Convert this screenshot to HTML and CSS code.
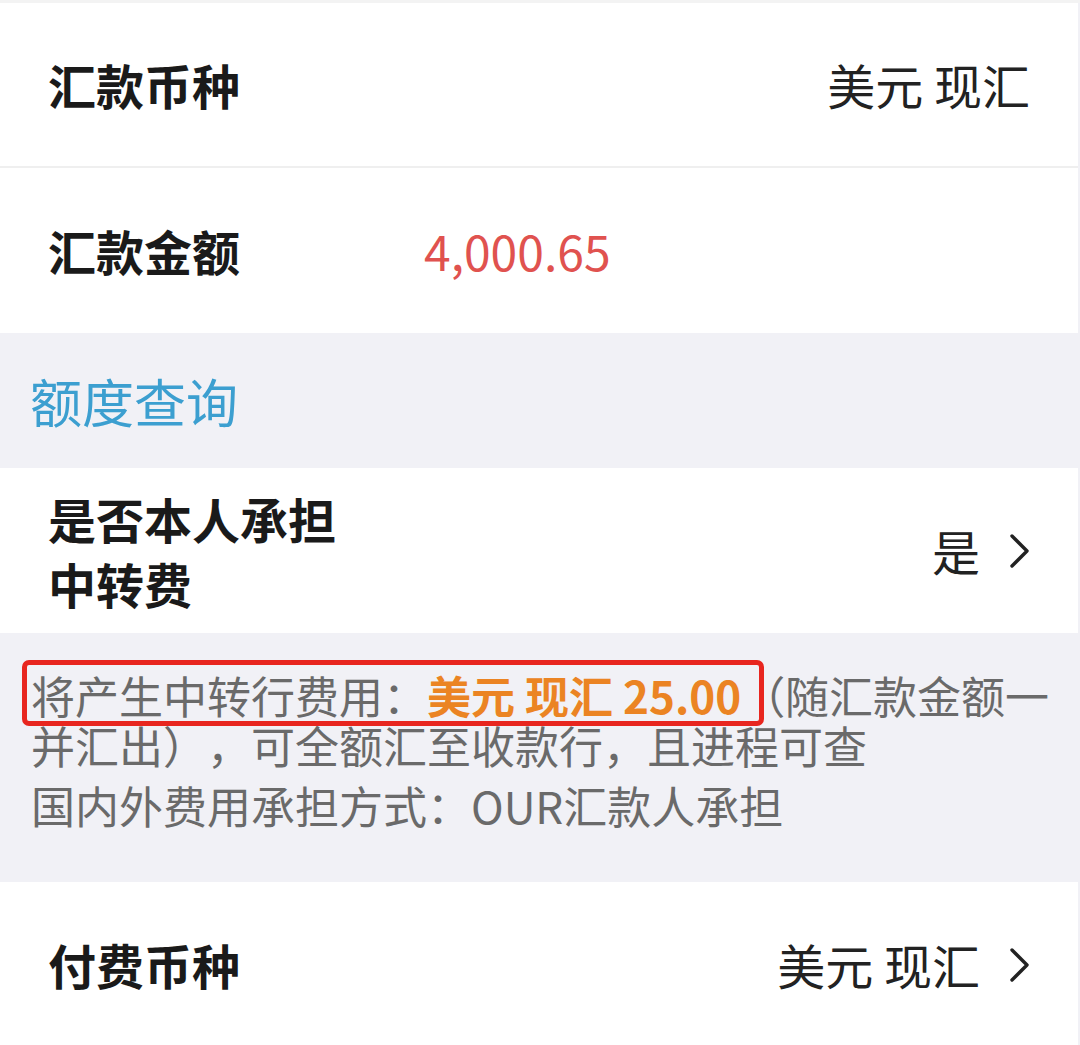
FILE: index.html
```html
<!DOCTYPE html>
<html lang="zh-CN">
<head>
  <meta charset="UTF-8" />
  <meta name="viewport" content="width=device-width, initial-scale=1.0" />
  <title>汇款</title>
  <link rel="stylesheet" href="styles.css">
</head>

<body>
  <div class="fila fila-primera">
    <span class="etiqueta">汇款币种</span>
    <span class="valor">美元 现汇</span>
  </div>

  <div class="fila">
    <span class="etiqueta etiqueta-ancha">汇款金额</span>
    <span class="monto">4,000.65</span>
  </div>

  <div class="seccion">
    <a class="enlace" href="#">额度查询</a>
  </div>

  <div class="fila">
    <span class="etiqueta etiqueta-doble">是否本人承担<br>中转费</span>
    <span class="valor">是
      <svg class="flecha" width="20" height="34" viewBox="0 0 20 34"><polyline points="2,2 17,17 2,32" /></svg>
    </span>
  </div>

  <div class="aviso">
    <p><span class="marcado"><span>将产生中转行费用：</span><b class="naranja">美元 现汇 25.00</b></span>（随汇款金额一并汇出），可全额汇至收款行，且进程可查</p>
    <p class="segundo">国内外费用承担方式：OUR汇款人承担</p>
  </div>

  <div class="fila">
    <span class="etiqueta">付费币种</span>
    <span class="valor">美元 现汇
      <svg class="flecha" width="20" height="34" viewBox="0 0 20 34"><polyline points="2,2 17,17 2,32" /></svg>
    </span>
  </div>
</body>
</html>
```

FILE: styles.css
```css
body {
  background: #f1f1f6;
  color: #222;
  font-family: "Noto Sans CJK SC", "Noto Sans", sans-serif;
  margin: 0;
  padding: 3px 0 0 0;
  height: 1042px;
  overflow: hidden;
  text-spacing-trim: space-all;
  box-shadow: inset 0 3px 0 #f3f3f3;
}

.fila {
  background: #fff;
  height: 165px;
  margin-right: 2px;
  padding: 0 48px;
  display: flex;
  align-items: center;
  font-size: 48px;
  line-height: 65px;
}

.fila-primera {
  height: 163px;
  border-bottom: 2px solid #efefef;
}

.etiqueta {
  font-weight: 700;
  color: #1a1a1a;
  flex: 1;
}

.etiqueta-ancha {
  flex: 0 0 376px;
}

.valor {
  display: flex;
  align-items: center;
  gap: 30px;
  color: #222;
}

.monto {
  color: #e0524f;
}

.flecha polyline {
  fill: none;
  stroke: #222;
  stroke-width: 3.4;
  stroke-linecap: round;
  stroke-linejoin: round;
}

.seccion {
  height: 135px;
  display: flex;
  align-items: center;
  padding-left: 30px;
}

.enlace {
  color: #3c9fd0;
  font-size: 52px;
  text-decoration: none;
}

.aviso {
  padding: 37px 30px 52px 31px;
  color: #6a6a6a;
  font-size: 44px;
  line-height: 50px;
}

.aviso p {
  margin: 0;
}

.aviso .segundo {
  margin-top: 10px;
}

.naranja {
  color: #eb8423;
  font-weight: 700;
}

/* recuadro rojo encima del texto */
.marcado {
  position: relative;
}

.marcado::after {
  content: "";
  position: absolute;
  top: -3px;
  bottom: 1px;
  left: -9px;
  right: -23px;
  border: 5px solid #e8261f;
  border-radius: 7px;
}
```
